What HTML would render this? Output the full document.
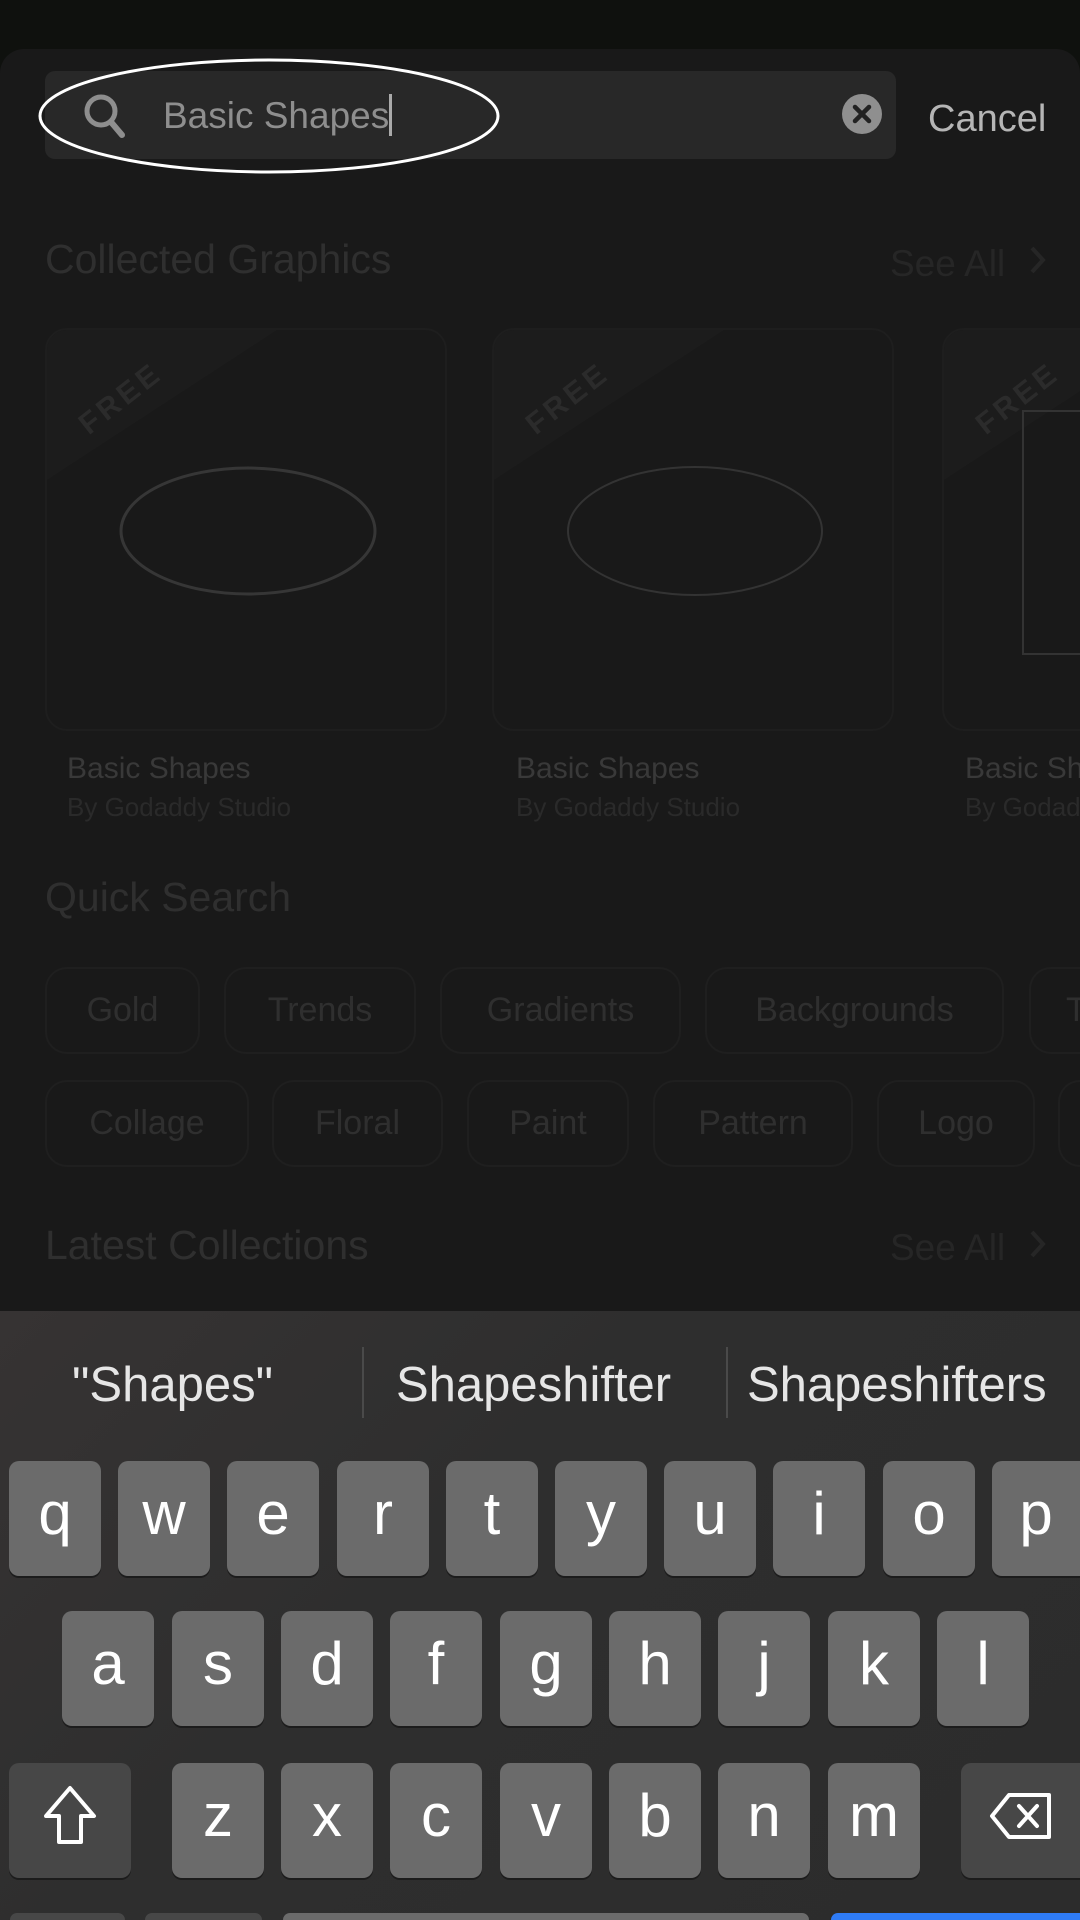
<!DOCTYPE html>
<html style="overflow:hidden;width:1080px;height:1920px"><head><meta charset="utf-8">
<style>
*{margin:0;padding:0;box-sizing:border-box}
body{width:1080px;height:1920px;background:#0f110e;position:relative;overflow:hidden;font-family:"Liberation Sans",sans-serif}
.a{position:absolute}
.panel{left:0;top:49px;width:1080px;height:1300px;background:#191919;border-radius:24px 24px 0 0}
.h{font-size:41px;color:#2f2f2f;white-space:nowrap}
.see{font-size:37px;color:#262626}
.card{width:402px;height:403px;border:2px solid #1e1e1e;border-radius:22px;background:#191919;overflow:hidden}
.free{position:absolute;left:26px;top:52px;font-size:30px;letter-spacing:4px;font-weight:bold;color:#2b2b2b;transform:rotate(-38deg)}
.t1{font-size:30px;color:#393939;white-space:nowrap}
.t2{font-size:26px;color:#2a2a2a;white-space:nowrap}
.chip{height:87px;border:2px solid #1f1f1f;border-radius:22px;font-size:34px;color:#2f2f2f;display:flex;align-items:center;justify-content:center}
.kb{left:0;top:1311px;width:1080px;height:609px;background:linear-gradient(135deg,#363333,#2e2e2e 40%,#2c2c2c)}
.key{width:92px;height:115px;background:#6b6b6b;border-radius:10px;box-shadow:0 2px 0 #1c1c1c;color:#fff;font-size:60px;display:flex;align-items:center;justify-content:center;padding-bottom:10px}
.sug{font-size:49px;color:#e6e6e6;white-space:nowrap}
</style></head><body>
<div class="a panel"></div>
<div class="a" style="left:45px;top:71px;width:851px;height:88px;background:#282828;border-radius:10px"></div>
<svg class="a" style="left:82px;top:92px" width="46" height="48" viewBox="0 0 46 48"><circle cx="19" cy="19" r="14" fill="none" stroke="#8e8e8e" stroke-width="5"/><line x1="29" y1="30" x2="40" y2="43" stroke="#8e8e8e" stroke-width="6" stroke-linecap="round"/></svg>
<div class="a" style="left:163px;top:94px;font-size:37px;color:#8e8e8e;white-space:nowrap">Basic Shapes<span style="display:inline-block;width:3px;height:42px;background:#aaa;vertical-align:-8px"></span></div>
<svg class="a" style="left:842px;top:94px" width="40" height="40"><circle cx="20" cy="20" r="20" fill="#8f8f8f"/><path d="M13 13L27 27M27 13L13 27" stroke="#222" stroke-width="4.5" stroke-linecap="round"/></svg>
<div class="a" style="left:928px;top:98px;font-size:38px;color:#b5b5b5">Cancel</div>
<svg class="a" style="left:0;top:0" width="520" height="200"><ellipse cx="269" cy="116" rx="229" ry="56" fill="none" stroke="#fff" stroke-width="3"/></svg>

<div class="a h" style="left:45px;top:236px">Collected Graphics</div>
<div class="a see" style="left:890px;top:243px">See All</div>
<svg class="a" style="left:1028px;top:244px" width="20" height="32"><path d="M4 4L15 16L4 28" fill="none" stroke="#262626" stroke-width="4"/></svg>

<div class="a card" style="left:45px;top:328px"><svg class="a" style="left:0;top:0" width="402" height="403"><path d="M0 0H230L0 150Z" fill="#1c1c1c"/><ellipse cx="201" cy="201" rx="127" ry="63" fill="none" stroke="#363636" stroke-width="3"/></svg><div class="free">FREE</div></div>
<div class="a card" style="left:492px;top:328px"><svg class="a" style="left:0;top:0" width="402" height="403"><path d="M0 0H230L0 150Z" fill="#1c1c1c"/><ellipse cx="201" cy="201" rx="127" ry="64" fill="none" stroke="#333" stroke-width="2"/></svg><div class="free">FREE</div></div>
<div class="a card" style="left:942px;top:328px"><svg class="a" style="left:0;top:0" width="402" height="403"><path d="M0 0H230L0 150Z" fill="#1c1c1c"/></svg><div class="free">FREE</div>
<div class="a" style="left:78px;top:80px;width:200px;height:245px;border:2px solid #333"></div></div>

<div class="a t1" style="left:67px;top:752px">Basic Shapes</div>
<div class="a t2" style="left:67px;top:792px">By Godaddy Studio</div>
<div class="a t1" style="left:516px;top:752px">Basic Shapes</div>
<div class="a t2" style="left:516px;top:792px">By Godaddy Studio</div>
<div class="a t1" style="left:965px;top:752px">Basic Shapes</div>
<div class="a t2" style="left:965px;top:792px">By Godaddy Studio</div>

<div class="a h" style="left:45px;top:874px">Quick Search</div>

<div class="a chip" style="left:45px;top:967px;width:155px">Gold</div>
<div class="a chip" style="left:224px;top:967px;width:192px">Trends</div>
<div class="a chip" style="left:440px;top:967px;width:241px">Gradients</div>
<div class="a chip" style="left:705px;top:967px;width:299px">Backgrounds</div>
<div class="a chip" style="left:1029px;top:967px;width:51px;border-right:none;border-radius:22px 0 0 22px;justify-content:flex-start;padding-left:35px;overflow:hidden">T</div>
<div class="a chip" style="left:45px;top:1080px;width:204px">Collage</div>
<div class="a chip" style="left:272px;top:1080px;width:171px">Floral</div>
<div class="a chip" style="left:467px;top:1080px;width:162px">Paint</div>
<div class="a chip" style="left:653px;top:1080px;width:200px">Pattern</div>
<div class="a chip" style="left:877px;top:1080px;width:158px">Logo</div>
<div class="a chip" style="left:1058px;top:1080px;width:22px;border-right:none;border-radius:22px 0 0 22px"></div>

<div class="a h" style="left:45px;top:1222px">Latest Collections</div>
<div class="a see" style="left:890px;top:1227px">See All</div>
<svg class="a" style="left:1028px;top:1228px" width="20" height="32"><path d="M4 4L15 16L4 28" fill="none" stroke="#262626" stroke-width="4"/></svg>

<div class="a kb"></div>
<div class="a sug" style="left:72px;top:1357px">"Shapes"</div>
<div class="a" style="left:362px;top:1347px;width:2px;height:71px;background:#4a4a4a"></div>
<div class="a sug" style="left:396px;top:1357px">Shapeshifter</div>
<div class="a" style="left:726px;top:1347px;width:2px;height:71px;background:#4a4a4a"></div>
<div class="a sug" style="left:747px;top:1357px">Shapeshifters</div>

<div class="a key" style="left:9px;top:1461px">q</div>
<div class="a key" style="left:118px;top:1461px">w</div>
<div class="a key" style="left:227px;top:1461px">e</div>
<div class="a key" style="left:337px;top:1461px">r</div>
<div class="a key" style="left:446px;top:1461px">t</div>
<div class="a key" style="left:555px;top:1461px">y</div>
<div class="a key" style="left:664px;top:1461px">u</div>
<div class="a key" style="left:773px;top:1461px">i</div>
<div class="a key" style="left:883px;top:1461px">o</div>
<div class="a key" style="left:992px;top:1461px;width:88px;border-radius:10px 0 0 10px">p</div>

<div class="a key" style="left:62px;top:1611px">a</div>
<div class="a key" style="left:172px;top:1611px">s</div>
<div class="a key" style="left:281px;top:1611px">d</div>
<div class="a key" style="left:390px;top:1611px">f</div>
<div class="a key" style="left:500px;top:1611px">g</div>
<div class="a key" style="left:609px;top:1611px">h</div>
<div class="a key" style="left:718px;top:1611px">j</div>
<div class="a key" style="left:828px;top:1611px">k</div>
<div class="a key" style="left:937px;top:1611px">l</div>

<div class="a key" style="left:9px;top:1763px;width:122px;background:#474747"><svg width="60" height="64" viewBox="0 0 60 64"><path d="M30 4L54 32H41V58H19V32H6Z" fill="none" stroke="#fff" stroke-width="4" stroke-linejoin="round"/></svg></div>
<div class="a key" style="left:172px;top:1763px">z</div>
<div class="a key" style="left:281px;top:1763px">x</div>
<div class="a key" style="left:390px;top:1763px">c</div>
<div class="a key" style="left:500px;top:1763px">v</div>
<div class="a key" style="left:609px;top:1763px">b</div>
<div class="a key" style="left:718px;top:1763px">n</div>
<div class="a key" style="left:828px;top:1763px">m</div>
<div class="a key" style="left:961px;top:1763px;width:119px;border-radius:10px 0 0 10px;background:#474747;justify-content:flex-start;padding-left:28px"><svg width="64" height="48" viewBox="0 0 64 48"><path d="M20 3H60V45H20L3 24Z" fill="none" stroke="#fff" stroke-width="4" stroke-linejoin="round"/><path d="M30 14L48 34M48 14L30 34" stroke="#fff" stroke-width="4" stroke-linecap="round"/></svg></div>

<div class="a" style="left:10px;top:1913px;width:115px;height:7px;background:#474747;border-radius:10px 10px 0 0"></div>
<div class="a" style="left:145px;top:1913px;width:117px;height:7px;background:#474747;border-radius:10px 10px 0 0"></div>
<div class="a" style="left:283px;top:1913px;width:526px;height:7px;background:#6b6b6b;border-radius:10px 10px 0 0"></div>
<div class="a" style="left:831px;top:1913px;width:249px;height:7px;background:#2f7cf6;border-radius:10px 0 0 0"></div>
</body></html>
